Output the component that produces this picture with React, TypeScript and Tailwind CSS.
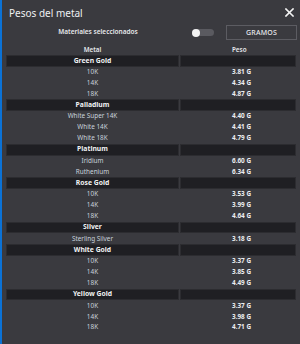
import React from "react";

const groups: { name: string; items: [string, string][] }[] = [
  { name: "Green Gold", items: [["10K", "3.81 G"], ["14K", "4.34 G"], ["18K", "4.87 G"]] },
  { name: "Palladium", items: [["White Super 14K", "4.40 G"], ["White 14K", "4.41 G"], ["White 18K", "4.79 G"]] },
  { name: "Platinum", items: [["Iridium", "6.60 G"], ["Ruthenium", "6.34 G"]] },
  { name: "Rose Gold", items: [["10K", "3.53 G"], ["14K", "3.99 G"], ["18K", "4.64 G"]] },
  { name: "Silver", items: [["Sterling Silver", "3.18 G"]] },
  { name: "White Gold", items: [["10K", "3.37 G"], ["14K", "3.85 G"], ["18K", "4.49 G"]] },
  { name: "Yellow Gold", items: [["10K", "3.37 G"], ["14K", "3.98 G"], ["18K", "4.71 G"]] },
];

export default function App() {
  return (
    <div
      className="w-[300px] h-[344px] bg-[#3a3a3f] border-l-2 border-[#0b72d6] flex flex-col overflow-hidden text-[#e6e8ec]"
      style={{ fontFamily: '"Noto Sans", "Open Sans", sans-serif' }}
    >
      {/* Title bar */}
      <div className="h-[25px] flex items-center justify-between pl-[7px] pr-[5px]">
        <span className="text-[10px] leading-none text-[#eef0f2]">Pesos del metal</span>
        <svg width="9" height="9" viewBox="0 0 9 9" className="mr-[1px]">
          <path d="M1 1 L8 8 M8 1 L1 8" stroke="#f4f4f4" strokeWidth="1.6" strokeLinecap="square" />
        </svg>
      </div>
      {/* Controls */}
      <div className="h-[15px] flex items-center">
        <div className="ml-[56px] w-[80px] text-center text-[6.5px] font-semibold leading-none whitespace-nowrap">
          Materiales seleccionados
        </div>
        <div className="ml-[54px] w-[22px] h-[7px] rounded-full bg-[#5a5a60] relative">
          <div className="absolute left-0 top-[-0.5px] w-[8px] h-[8px] rounded-full bg-[#f2f2f2]" />
        </div>
        <div className="ml-[12px] w-[71px] h-[15px] border border-[#5c5c62] flex items-center justify-center text-[7px] leading-none font-medium tracking-[0.2px]">
          GRAMOS
        </div>
      </div>
      {/* Table */}
      <div className="mt-[5px] pl-[4px] pr-[4px] flex flex-col">
        <div className="h-[10px] flex items-center text-[6.3px] leading-none font-semibold">
          <div className="w-[173px] text-center">Metal</div>
          <div className="w-[1px]" />
          <div className="flex-1 pl-[52px]">Peso</div>
        </div>
        {groups.map((g) => (
          <React.Fragment key={g.name}>
            <div className="h-[11.8px] flex">
              <div className="w-[173px] bg-[#1f1f23] border border-[#2c2c30] flex items-center justify-center text-[6.8px] leading-none font-bold text-[#f0f2f4]">
                {g.name}
              </div>
              <div className="w-[1px]" />
              <div className="flex-1 bg-[#1f1f23] border border-[#2c2c30]" />
            </div>
            {g.items.map(([m, w], i) => (
              <div key={i} className="h-[10.87px] flex items-center text-[6.4px] leading-none">
                <div className="w-[173px] text-center text-[#c9d3dd]">{m}</div>
                <div className="w-[1px]" />
                <div className="flex-1 pl-[52px] font-bold text-[#eceef0]">{w}</div>
              </div>
            ))}
          </React.Fragment>
        ))}
      </div>
    </div>
  );
}
